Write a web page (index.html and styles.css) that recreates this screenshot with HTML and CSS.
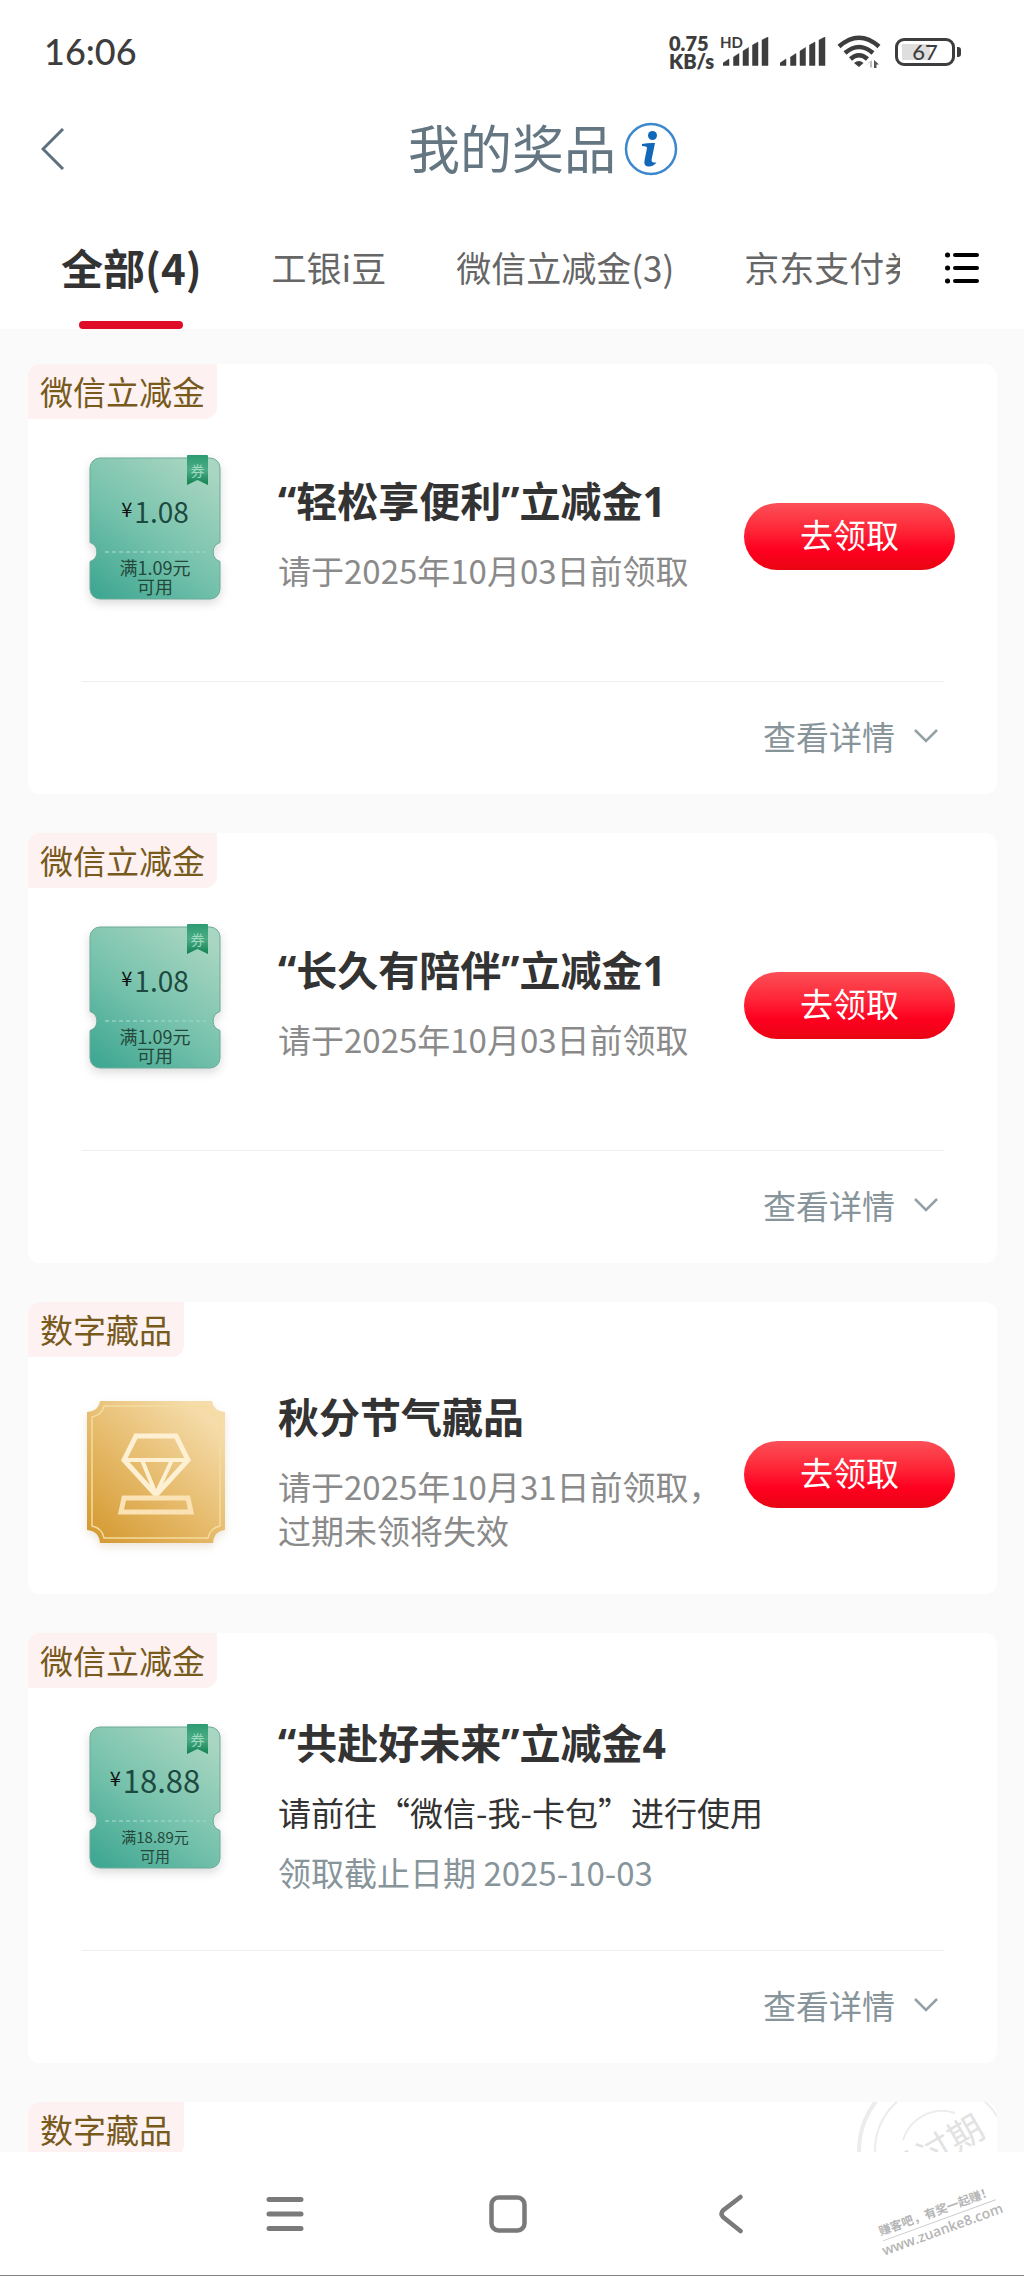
FILE: index.html
```html
<!DOCTYPE html>
<html lang="zh-CN">
<head>
<meta charset="utf-8">
<meta name="viewport" content="width=device-width, initial-scale=1">
<title>我的奖品</title>
<link rel="stylesheet" href="styles.css">
</head>
<body>
<svg class="defs" width="0" height="0" aria-hidden="true">
  <defs>
    <linearGradient id="mint" x1="0.1" y1="1" x2="0.8" y2="0">
      <stop offset="0" stop-color="#3fa792"/>
      <stop offset="0.45" stop-color="#74c1ab"/>
      <stop offset="1" stop-color="#a9d6c2"/>
    </linearGradient>
    <linearGradient id="ribbon" x1="0" y1="0" x2="0" y2="1">
      <stop offset="0" stop-color="#2d9b71"/>
      <stop offset="0.5" stop-color="#4bac87"/>
      <stop offset="1" stop-color="#11804f"/>
    </linearGradient>
    <linearGradient id="gold" x1="0.1" y1="1" x2="0.85" y2="0.1">
      <stop offset="0" stop-color="#d59a32"/>
      <stop offset="0.5" stop-color="#e6bb6c"/>
      <stop offset="1" stop-color="#f5dcaa"/>
    </linearGradient>
    <symbol id="coupon" viewBox="0 0 150 162">
      <path d="M20 6H130a10 10 0 0 1 10 10V90.500a10 10 0 0 0 0 19V137a10 10 0 0 1-10 10H20a10 10 0 0 1-10-10V109.500a10 10 0 0 0 0-19V16a10 10 0 0 1 10-10z" fill="url(#mint)" stroke="#6bab98" stroke-width="1"/>
      <path d="M25 100H126" stroke="#94d3c2" stroke-width="1.500" stroke-dasharray="4 3"/>
      <path d="M108 3H127a1 1 0 0 1 1 1V33L117.500 28 107 33V4a1 1 0 0 1 1-1z" fill="url(#ribbon)"/>
    </symbol>
    <symbol id="signal" viewBox="0 0 46 30">
      <path d="M0 28.500V26L6 22V28.500zM10.500 28.500V20L16 16.500V28.500zM20 28.500V14L25.500 10.500V28.500zM29.500 28.500V8L35 5V28.500zM39 28.500V3L45 0V28.500z" fill="#3d3d3d" stroke="#3d3d3d" stroke-width="0.500" stroke-linejoin="round"/>
    </symbol>
    <symbol id="chevron" viewBox="0 0 24 14">
      <path d="M1 1L12 12 23 1" fill="none" stroke="#93a0a6" stroke-width="2.500"/>
    </symbol>
  </defs>
</svg>

<div class="screen">
  <div class="status">
    <time class="clock">16:06</time>
    <div class="speed">0.75<br>KB/s</div>
    <div class="sim"><span class="hd">HD</span><svg class="signal"><use href="#signal"/></svg></div>
    <svg class="signal"><use href="#signal"/></svg>
    <svg class="wifi" viewBox="0 0 44 34" aria-hidden="true">
      <g fill="none" stroke="#3d3d3d" stroke-width="4.500">
        <path d="M2 11.500Q22-6 42 11.500"/>
        <path d="M8 18Q22 6 36 18"/>
        <path d="M13.500 24Q22 16.500 30.500 24"/>
      </g>
      <path d="M17 28Q22 24 26.500 28L22 32z" fill="#3d3d3d"/>
      <path d="M33 26V32.500H35V25L29 31" fill="#bbb"/>
      <path d="M37 33V25L42 29.500H39.500V33z" fill="#555"/>
    </svg>
    <div class="battery">67</div>
  </div>

  <header class="header">
    <button class="back" type="button" aria-label="返回">
      <svg width="24" height="42" viewBox="0 0 24 42"><path d="M22 1L2 21 22 41" fill="none" stroke="#5c7080" stroke-width="3"/></svg>
    </button>
    <h1 class="title">我的奖品</h1>
    <button class="info" type="button" aria-label="说明">
      <svg width="54" height="54" viewBox="0 0 54 54">
        <circle cx="27" cy="27" r="25" fill="#fff" stroke="#3d87cc" stroke-width="2.500"/>
        <circle cx="28.500" cy="13.500" r="4.500" fill="#1268b8"/>
        <path d="M18 22Q25 20.500 31 21L27.500 38Q27.500 41 32.500 40.500Q29 45 24 44.500Q19.500 44 20.500 38.500L23 26Q23.300 24 18 24z" fill="#1268b8"/>
      </svg>
    </button>
  </header>

  <nav class="tabs">
    <div class="tabs-list">
      <a class="tab tab-active" href="#all">全部(4)</a>
      <a class="tab" href="#beans">工银i豆</a>
      <a class="tab" href="#wechat">微信立减金(3)</a>
      <a class="tab" href="#jd">京东支付券</a>
    </div>
    <button class="tabs-more" type="button" aria-label="全部分类">
      <svg width="35" height="32" viewBox="0 0 35 32" stroke="#000" stroke-width="4" stroke-linecap="round">
        <path d="M2.500 3h.1M2.500 16h.1M2.500 29h.1" stroke-width="5"/>
        <path d="M10 3H32M10 16H32M10 29H32"/>
      </svg>
    </button>
  </nav>

  <main class="list">
    <article class="card">
      <span class="tag">微信立减金</span>
      <div class="body">
        <div class="coupon">
          <svg class="coupon-bg"><use href="#coupon"/></svg>
          <span class="ribbon">券</span>
          <div class="amount"><span class="yen">¥</span>1.08</div>
          <div class="limit">满1.09元<br>可用</div>
        </div>
        <div class="text">
          <h2 class="name">“轻松享便利”立减金1</h2>
          <p class="desc">请于2025年10月03日前领取</p>
        </div>
        <button class="claim" type="button">去领取</button>
      </div>
      <div class="more"><button class="details" type="button">查看详情<svg width="24" height="14"><use href="#chevron"/></svg></button></div>
    </article>

    <article class="card">
      <span class="tag">微信立减金</span>
      <div class="body">
        <div class="coupon">
          <svg class="coupon-bg"><use href="#coupon"/></svg>
          <span class="ribbon">券</span>
          <div class="amount"><span class="yen">¥</span>1.08</div>
          <div class="limit">满1.09元<br>可用</div>
        </div>
        <div class="text">
          <h2 class="name">“长久有陪伴”立减金1</h2>
          <p class="desc">请于2025年10月03日前领取</p>
        </div>
        <button class="claim" type="button">去领取</button>
      </div>
      <div class="more"><button class="details" type="button">查看详情<svg width="24" height="14"><use href="#chevron"/></svg></button></div>
    </article>

    <article class="card card-short">
      <span class="tag">数字藏品</span>
      <div class="body">
        <svg class="medal" viewBox="0 0 140 144" aria-hidden="true">
          <path d="M14 1H126Q127 11 139 12V130Q128 131 127 143H14Q13 131 1 130V12Q13 11 14 1z" fill="url(#gold)"/>
          <path d="M18 6H122Q124 15 134 17V126Q124 128 122 138H18Q16 128 6 126V17Q16 15 18 6z" fill="none" stroke="#f5dc9f" stroke-width="1.500"/>
          <g fill="none" stroke="#fdf0d3" stroke-width="5">
            <path d="M50 36H90L102 60 70 95 38 60z"/>
            <path d="M38 60H102M56 60L70 94 86 60" stroke-width="4"/>
            <path d="M38 98H102L105 112H35z" stroke="#fbe2b4"/>
          </g>
        </svg>
        <div class="text">
          <h2 class="name">秋分节气藏品</h2>
          <p class="desc">请于2025年10月31日前领取，过期未领将失效</p>
        </div>
        <button class="claim" type="button">去领取</button>
      </div>
    </article>

    <article class="card">
      <span class="tag">微信立减金</span>
      <div class="body">
        <div class="coupon coupon-large">
          <svg class="coupon-bg"><use href="#coupon"/></svg>
          <span class="ribbon">券</span>
          <div class="amount"><span class="yen">¥</span>18.88</div>
          <div class="limit">满18.89元<br>可用</div>
        </div>
        <div class="text text-tall">
          <h2 class="name">“共赴好未来”立减金4</h2>
          <p class="desc desc-strong">请前往“微信-我-卡包”进行使用</p>
          <p class="desc desc-date">领取截止日期 2025-10-03</p>
        </div>
      </div>
      <div class="more"><button class="details" type="button">查看详情<svg width="24" height="14"><use href="#chevron"/></svg></button></div>
    </article>

    <article class="card">
      <span class="tag">数字藏品</span>
      <svg class="stamp" viewBox="0 0 140 134">
        <g fill="none" stroke="#ececec">
          <circle cx="84" cy="49" r="82" stroke-width="4"/>
          <circle cx="84" cy="49" r="66" stroke-width="2"/>
          <path d="M46 38A41 41 0 0 1 98 11" stroke-width="2"/>
        </g>
        <text class="stamp-text" x="79" y="61" text-anchor="middle" transform="rotate(-30 79 50)">已过期</text>
      </svg>
      <div class="body"></div>
    </article>
  </main>

  <footer class="sysbar">
    <button class="sys" type="button" aria-label="菜单">
      <svg width="38" height="38" viewBox="0 0 38 38"><path d="M3 4.500H35M3 19H35M3 33.500H35" stroke="#7a7a7a" stroke-width="5" stroke-linecap="round"/></svg>
    </button>
    <button class="sys" type="button" aria-label="主屏幕">
      <svg width="38" height="38" viewBox="0 0 38 38"><rect x="2.500" y="2.500" width="33" height="33" rx="7" fill="none" stroke="#7a7a7a" stroke-width="4.500"/></svg>
    </button>
    <button class="sys" type="button" aria-label="后退">
      <svg width="24" height="40" viewBox="0 0 24 40"><path d="M21.500 3L4 16.500Q1 20 4 23L21.500 37" fill="none" stroke="#7a7a7a" stroke-width="4.500" stroke-linecap="round"/></svg>
    </button>
    <div class="watermark">
      <span class="wm-slogan">赚客吧，有奖一起赚！</span>
      <span class="wm-url">www.zuanke8.com</span>
    </div>
  </footer>
</div>
</body>
</html>
```
FILE: styles.css
```css
* { box-sizing: border-box; }

body {
  margin: 0;
  background: #fff;
  color: #333;
  font-family: "Noto Sans CJK SC", sans-serif;
  font-size: 33px;
}

h1, h2, p { margin: 0; }

button {
  padding: 0;
  border: 0;
  background: none;
  color: inherit;
  font: inherit;
}

svg { display: block; flex: none; }

.defs { position: absolute; }

.screen {
  display: flex;
  flex-direction: column;
  height: 100vh;
}

/* Status bar */
.status {
  display: flex;
  align-items: center;
  height: 104px;
  flex: none;
  padding: 0 64px 0 44px;
  color: #3d3d3d;
  font-family: Lato, sans-serif;
}

.clock {
  flex: 1;
  padding-bottom: 3px;
  font-size: 36px;
  font-weight: 500;
}

.speed {
  width: 54px;
  font-size: 20px;
  font-weight: 800;
  line-height: 18px;
}

.sim { position: relative; }

.hd {
  position: absolute;
  left: -3px;
  top: -2px;
  font-size: 15px;
  font-weight: 700;
  line-height: 14px;
}

.signal {
  width: 46px;
  height: 30px;
  margin-right: 11px;
}

.wifi {
  width: 44px;
  height: 34px;
  margin-right: 14px;
}

.battery {
  position: relative;
  width: 60px;
  height: 28px;
  margin-right: 5px;
  border: 3px solid #3d3d3d;
  border-radius: 9px;
  background: linear-gradient(#dedede, #dedede) 4px 3px / 28px 16px no-repeat;
  font-size: 22px;
  font-weight: 500;
  line-height: 22px;
  text-align: center;
}

.battery::after {
  content: "";
  position: absolute;
  right: -9px;
  top: 6px;
  width: 4px;
  height: 10px;
  border-radius: 0 3px 3px 0;
  background: #3d3d3d;
}

/* Title bar */
.header {
  display: grid;
  grid-template-columns: 1fr auto 1fr;
  align-items: center;
  height: 90px;
  flex: none;
  padding: 0 41px;
}

.back, .info { justify-self: start; }

.info { margin-left: 8px; }

.title {
  padding-bottom: 4px;
  color: #647682;
  font-size: 52px;
  font-weight: 400;
  line-height: 76px;
}

/* Tabs */
.tabs {
  display: flex;
  align-items: center;
  height: 135px;
  flex: none;
  padding: 12px 44px 0 61px;
}

.tabs-list {
  display: flex;
  align-items: center;
  gap: 70px;
  flex: 1;
  min-width: 0;
  height: 100%;
  margin-right: 45px;
  overflow: hidden;
}

.tab {
  position: relative;
  flex: none;
  padding-bottom: 2px;
  color: #666;
  font-size: 35px;
  line-height: 121px;
  text-decoration: none;
  white-space: nowrap;
}

.tab-active {
  color: #333;
  font-size: 42px;
  font-weight: 700;
}

.tab-active::after {
  content: "";
  position: absolute;
  left: 50%;
  bottom: 0;
  width: 104px;
  height: 8px;
  margin-left: -52px;
  border-radius: 4px;
  background: #df0d27;
}

/* Prize list */
.list {
  display: flex;
  flex-direction: column;
  gap: 39px;
  flex: 1;
  min-height: 0;
  padding: 35px 27px 0 28px;
  overflow: hidden;
  background: #fafafa;
}

.card {
  position: relative;
  flex: none;
  border-radius: 12px;
  background: #fff;
  overflow: hidden;
}

.card-short { padding-bottom: 7px; }

.tag {
  display: block;
  width: fit-content;
  padding: 0 12px;
  border-radius: 0 0 12px 0;
  background: #fdf1f1;
  color: #775a1c;
  line-height: 55px;
}

.body {
  display: flex;
  align-items: center;
  min-height: 230px;
  padding: 0 42px 0 58px;
}

.coupon {
  position: relative;
  width: 140px;
  height: 154px;
  flex: none;
  margin-top: 2px;
  padding-top: 33px;
  color: #1d4a40;
  text-align: center;
}

.coupon-bg {
  position: absolute;
  left: -6px;
  top: -6px;
  width: 150px;
  height: 162px;
  filter: drop-shadow(0 4px 5px rgba(0, 0, 0, 0.14));
}

.ribbon {
  position: absolute;
  left: 101px;
  top: 1px;
  width: 21px;
  color: #9ddabf;
  font-size: 14px;
  line-height: 22px;
}

.amount {
  position: relative;
  display: flex;
  justify-content: center;
  gap: 2px;
  margin-right: 2px;
  font-size: 28px;
  line-height: 40px;
}

.yen {
  color: #111;
  font-size: 20px;
  line-height: 36px;
}

.limit {
  position: relative;
  margin: 27px 2px 0 0;
  color: #24483a;
  font-size: 18px;
  line-height: 19px;
}

.coupon-large .amount { font-size: 31px; }
.coupon-large .limit { font-size: 15px; }

.medal {
  width: 140px;
  height: 144px;
  filter: drop-shadow(0 4px 4px rgba(120, 80, 0, 0.14));
}

.text {
  flex: 1;
  min-width: 0;
  margin-left: 52px;
  padding-bottom: 6px;
}

.text-tall { padding-bottom: 0; }

.name {
  margin-bottom: 17px;
  font-family: "Noto Sans", "Noto Sans CJK SC", sans-serif;
  font-size: 41px;
  font-weight: 700;
  line-height: 60px;
}

.desc {
  color: #8a8a8a;
  line-height: 44px;
}

.desc + .desc { margin-top: 16px; }
.desc-strong { color: #333; }
.desc-date { color: #87959b; }

.claim {
  width: 211px;
  height: 67px;
  flex: none;
  margin-top: 4px;
  border-radius: 34px;
  background: linear-gradient(#fb5057, #fe2738 40%, #ff0020 70%, #e80512);
  color: #fff;
  padding-bottom: 4px;
}

.more {
  display: flex;
  justify-content: flex-end;
  height: 113px;
  margin: 32px 53px 0 54px;
  border-top: 1px solid #efefef;
  padding: 0 6px 5px 0;
}

.details {
  display: flex;
  align-items: center;
  gap: 19px;
  color: #87959b;
}

.stamp {
  position: absolute;
  right: 0;
  top: 0;
  width: 140px;
  height: 134px;
}

.stamp-text {
  fill: #e2e2e2;
  font-size: 35px;
}

/* System navigation */
.sysbar {
  position: relative;
  display: flex;
  justify-content: center;
  height: 124px;
  flex: none;
  padding: 0 8px 0 0;
  border-bottom: 1px solid #858585;
  background: #fff;
}

.sys {
  display: flex;
  align-items: center;
  justify-content: center;
  width: 223px;
}

.watermark {
  position: absolute;
  right: 22px;
  top: 48px;
  display: flex;
  flex-direction: column;
  align-items: center;
  color: #b5b5b5;
  transform: rotate(-20deg);
  white-space: nowrap;
}

.wm-slogan {
  border-bottom: 1px solid #ccc;
  font-size: 12px;
  font-weight: 700;
  line-height: 20px;
}

.wm-url {
  font-family: "Open Sans", sans-serif;
  font-size: 14px;
  font-weight: 600;
  line-height: 18px;
}
```
